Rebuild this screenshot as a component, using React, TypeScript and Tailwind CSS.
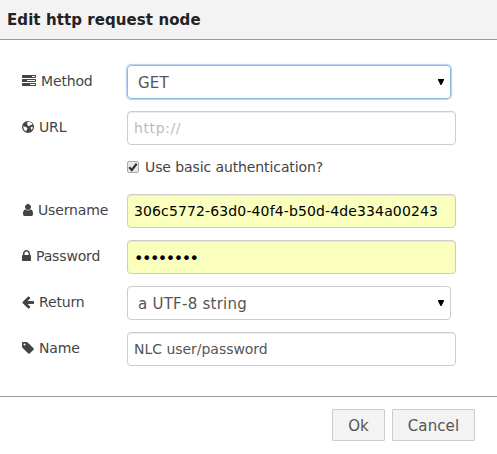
import type { ReactNode } from "react";

const ICONS = {
  tasks:
    "M1024 1408h640v-128h-640v128zm-384-512h1024v-128h-1024v128zm640-512h384v-128h-384v128zm512 832v256q0 26-19 45t-45 19h-1664q-26 0-45-19t-19-45v-256q0-26 19-45t45-19h1664q26 0 45 19t19 45zm0-512v256q0 26-19 45t-45 19h-1664q-26 0-45-19t-19-45v-256q0-26 19-45t45-19h1664q26 0 45 19t19 45zm0-512v256q0 26-19 45t-45 19h-1664q-26 0-45-19t-19-45v-256q0-26 19-45t45-19h1664q26 0 45 19t19 45z",
  globe:
    "M768 128a768 768 0 1 0 0 1536a768 768 0 1 0 0-1536zM700 260L960 230L1180 350L1330 520L1250 640L1100 600L1020 730L860 800L760 700L640 610L740 480L620 400zM190 700L330 850L520 900L700 1060L640 1200L560 1330L520 1480Q330 1370 230 1180Q150 960 190 700zM1130 860L1350 880L1400 1000L1290 1220L1180 1260L1120 1060z",
  user: "M1408 1399q0 109-62.5 187t-150.5 78h-854q-88 0-150.5-78t-62.5-187q0-85 8.5-160.5t31.5-152 58.5-131 94-89 134.5-34.5q131 128 313 128t313-128q76 0 134.500 34.500t94 89 58.500 131 31.500 152 8.500 160.500zm-256-887q0 159-112.500 271.500t-271.500 112.500-271.500-112.500-112.500-271.500 112.500-271.500 271.500-112.500 271.500 112.500 112.500 271.500z",
  lock: "M320 768h512v-192q0-106-75-181t-181-75-181 75-75 181v192zm832 96v576q0 40-28 68t-68 28h-960q-40 0-68-28t-28-68v-576q0-40 28-68t68-28h32v-192q0-184 132-316t316-132 316 132 132 316v192h32q40 0 68 28t28 68z",
  arrow:
    "M1536 896v128q0 53-32.500 90.500t-84.500 37.500h-704l293 294q38 36 38 90t-38 90l-75 76q-37 37-90 37-52 0-91-37l-651-652q-37-37-37-90 0-52 37-91l651-650q38-38 91-38 52 0 90 38l75 74q38 38 38 91t-38 91l-293 293h704q52 0 84.500 37.500t32.500 90.500z",
  tag: "M448 448q0-53-37.500-90.500t-90.500-37.500-90.500 37.500-37.500 90.500 37.500 90.500 90.500 37.500 90.500-37.500 37.500-90.500zm1067 576q0 53-37 90l-491 492q-39 37-91 37-53 0-90-37l-715-716q-38-37-64.500-101t-26.500-117v-416q0-52 38-90t90-38h416q53 0 117 26.500t102 64.500l715 714q37 39 37 91z",
};

function Icon({ name, units }: { name: keyof typeof ICONS; units: number }) {
  return (
    <svg
      className="h-[14px] shrink-0"
      style={{ width: units / 128 }}
      viewBox={`0 0 ${units} 1792`}
      fill="#444"
      fillRule="evenodd"
    >
      <path d={ICONS[name]} />
    </svg>
  );
}

function Row({ icon, units, label, children }: { icon: keyof typeof ICONS; units: number; label: string; children: ReactNode }) {
  return (
    <div className="flex h-[34px]">
      <div className="flex h-[32px] w-[105px] shrink-0 items-center gap-[5px] text-[14px] tracking-[-0.15px] text-[#444]">
        <Icon name={icon} units={units} />
        <span>{label}</span>
      </div>
      {children}
    </div>
  );
}

const box = "flex h-[34px] items-center rounded-[4px] border";
const input = `${box} w-[329px] px-[6px] shadow-[inset_0_1px_1px_rgba(0,0,0,0.075)]`;

function Select({ value, focused = false }: { value: string; focused?: boolean }) {
  return (
    <div
      className={`${box} w-[324px] justify-between pl-[10px] pr-[6px] text-[15px] tracking-[0.25px] text-[#555] ${
        focused ? "border-[#8fb9e6] shadow-[0_0_1px_1px_#b5d0ef]" : "border-[#ccc]"
      }`}
    >
      <span className="pt-[2px]">{value}</span>
      <svg className="mb-[1px] h-[6px] w-[6px]" viewBox="0 0 6 6" fill="#000">
        <path d="M0 0h6v1L3.500 6h-1L0 1z" />
      </svg>
    </div>
  );
}

export default function App() {
  return (
    <div className="h-[454px] w-[497px] overflow-hidden bg-white font-['DejaVu_Sans',sans-serif]">
      <header className="flex h-[40px] items-center border-b border-[#999] bg-[#f3f3f3] pl-[7px] pt-[2px] text-[15px] font-bold tracking-[0.08px] text-[#222]">
        Edit http request node
      </header>
      <main className="flex h-[356px] flex-col gap-[12px] pl-[22px] pt-[25px]">
        <Row icon="tasks" units={1792} label="Method">
          <Select value="GET" focused />
        </Row>
        <Row icon="globe" units={1536} label="URL">
          <div className={`${input} border-[#ccc] text-[14px] tracking-[0.6px] text-[#bbb]`}>http://</div>
        </Row>
        <div className="flex h-[25px] items-center gap-[6px] pb-[4px] pl-[105px] text-[14px] tracking-[-0.1px] text-[#444]">
          <span className="mb-[2px] flex h-[12px] w-[12px] items-center justify-center rounded-[2px] border border-[#aaa] bg-[#e8e8e8]">
            <svg className="h-[10px] w-[10px]" viewBox="0 0 10 10" fill="none" stroke="#333" strokeWidth="2.2">
              <path d="M1.200 5.300L3.800 8L8.700 1.700" />
            </svg>
          </span>
          <span>Use basic authentication?</span>
        </div>
        <Row icon="user" units={1408} label="Username">
          <div className={`${input} border-[#ccc] bg-[#faffbd] text-[14px] tracking-[0.13px] text-black`}>
            306c5772-63d0-40f4-b50d-4de334a00243
          </div>
        </Row>
        <Row icon="lock" units={1152} label="Password">
          <div className={`${input} border-[#ccc] bg-[#faffbd] pt-[3px] text-[16px] tracking-[-1.5px] text-black`}>••••••••</div>
        </Row>
        <Row icon="arrow" units={1536} label="Return">
          <Select value="a UTF-8 string" />
        </Row>
        <Row icon="tag" units={1536} label="Name">
          <div className={`${input} border-[#ccc] text-[14px] tracking-[-0.03px] text-[#555]`}>NLC user/password</div>
        </Row>
      </main>
      <footer className="flex h-[58px] justify-end gap-[7px] border-t border-[#999] pr-[22px] pt-[12px] text-[15px] text-[#555]">
        <button className="h-[32px] w-[53px] rounded-[1px] border border-[#ccc] bg-[#f3f3f3] pt-[2px]">Ok</button>
        <button className="h-[32px] w-[83px] rounded-[1px] border border-[#ccc] bg-[#f3f3f3] pt-[2px] tracking-[0.1px]">Cancel</button>
      </footer>
    </div>
  );
}
